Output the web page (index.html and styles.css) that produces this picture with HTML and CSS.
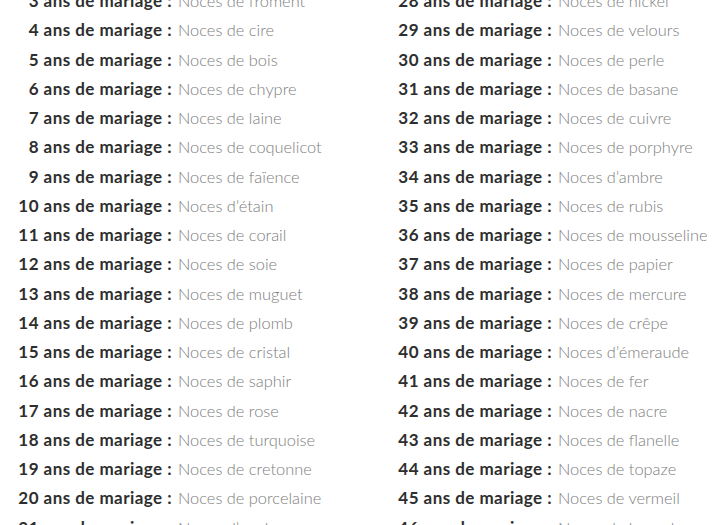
FILE: index.html
```html
<!DOCTYPE html>
<html lang="fr">
<head>
  <meta charset="UTF-8" />
  <meta name="viewport" content="width=device-width, initial-scale=1.0" />
  <title>Noces de mariage</title>
  <link rel="stylesheet" href="styles.css">
</head>
<body>
  <div class="noces">
    <div class="col">
      <span class="ans">3 ans de mariage :</span><span class="nom">Noces de froment</span>
      <span class="ans">4 ans de mariage :</span><span class="nom">Noces de cire</span>
      <span class="ans">5 ans de mariage :</span><span class="nom">Noces de bois</span>
      <span class="ans">6 ans de mariage :</span><span class="nom">Noces de chypre</span>
      <span class="ans">7 ans de mariage :</span><span class="nom">Noces de laine</span>
      <span class="ans">8 ans de mariage :</span><span class="nom">Noces de coquelicot</span>
      <span class="ans">9 ans de mariage :</span><span class="nom">Noces de faïence</span>
      <span class="ans">10 ans de mariage :</span><span class="nom">Noces d’étain</span>
      <span class="ans">11 ans de mariage :</span><span class="nom">Noces de corail</span>
      <span class="ans">12 ans de mariage :</span><span class="nom">Noces de soie</span>
      <span class="ans">13 ans de mariage :</span><span class="nom">Noces de muguet</span>
      <span class="ans">14 ans de mariage :</span><span class="nom">Noces de plomb</span>
      <span class="ans">15 ans de mariage :</span><span class="nom">Noces de cristal</span>
      <span class="ans">16 ans de mariage :</span><span class="nom">Noces de saphir</span>
      <span class="ans">17 ans de mariage :</span><span class="nom">Noces de rose</span>
      <span class="ans">18 ans de mariage :</span><span class="nom">Noces de turquoise</span>
      <span class="ans">19 ans de mariage :</span><span class="nom">Noces de cretonne</span>
      <span class="ans">20 ans de mariage :</span><span class="nom">Noces de porcelaine</span>
      <span class="ans">21 ans de mariage :</span><span class="nom">Noces d’opale</span>
    </div>
    <div class="col">
      <span class="ans">28 ans de mariage :</span><span class="nom">Noces de nickel</span>
      <span class="ans">29 ans de mariage :</span><span class="nom">Noces de velours</span>
      <span class="ans">30 ans de mariage :</span><span class="nom">Noces de perle</span>
      <span class="ans">31 ans de mariage :</span><span class="nom">Noces de basane</span>
      <span class="ans">32 ans de mariage :</span><span class="nom">Noces de cuivre</span>
      <span class="ans">33 ans de mariage :</span><span class="nom">Noces de porphyre</span>
      <span class="ans">34 ans de mariage :</span><span class="nom">Noces d’ambre</span>
      <span class="ans">35 ans de mariage :</span><span class="nom">Noces de rubis</span>
      <span class="ans">36 ans de mariage :</span><span class="nom">Noces de mousseline</span>
      <span class="ans">37 ans de mariage :</span><span class="nom">Noces de papier</span>
      <span class="ans">38 ans de mariage :</span><span class="nom">Noces de mercure</span>
      <span class="ans">39 ans de mariage :</span><span class="nom">Noces de crêpe</span>
      <span class="ans">40 ans de mariage :</span><span class="nom">Noces d’émeraude</span>
      <span class="ans">41 ans de mariage :</span><span class="nom">Noces de fer</span>
      <span class="ans">42 ans de mariage :</span><span class="nom">Noces de nacre</span>
      <span class="ans">43 ans de mariage :</span><span class="nom">Noces de flanelle</span>
      <span class="ans">44 ans de mariage :</span><span class="nom">Noces de topaze</span>
      <span class="ans">45 ans de mariage :</span><span class="nom">Noces de vermeil</span>
      <span class="ans">46 ans de mariage :</span><span class="nom">Noces de lavande</span>
    </div>
  </div>
</body>
</html>
```

FILE: styles.css
```css
body {
  margin: 0;
  background: #fff;
  font-family: 'Lato', 'Open Sans', sans-serif;
  font-size: 17px;
  overflow: hidden;
}
.noces {
  display: grid;
  grid-template-columns: 380px 340px;
  margin-top: -14px;
}
.col {
  display: grid;
  grid-template-columns: 172px auto;
  column-gap: 6px;
  line-height: 29.25px;
  white-space: nowrap;
}
.ans {
  text-align: right;
  font-weight: 700;
  letter-spacing: 0.45px;
  color: #2e2e2e;
}
.nom {
  font-size: 16.4px;
  font-weight: 300;
  color: #7d7d7d;
}
```
